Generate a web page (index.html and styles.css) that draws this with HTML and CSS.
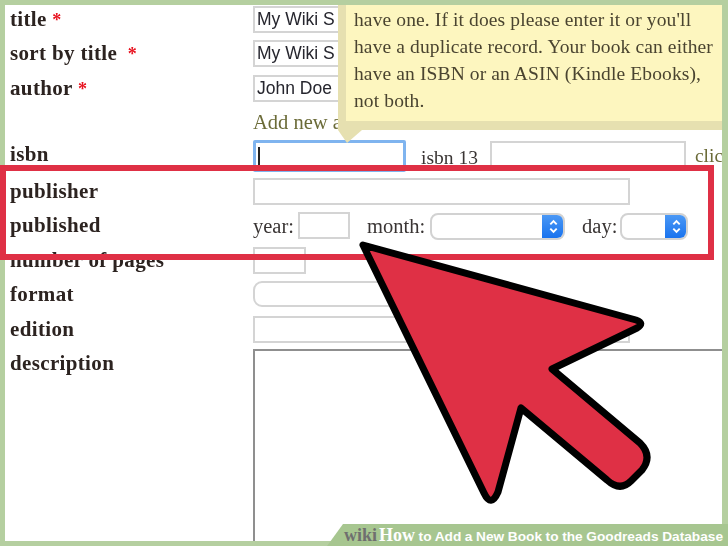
FILE: index.html
```html
<!DOCTYPE html>
<html lang="en">
<head>
<meta charset="utf-8">
<title>How to Add a New Book to the Goodreads Database</title>
<link rel="stylesheet" href="styles.css">
</head>
<body>
<main class="frame">
  <form class="form">
    <div class="label">title <span class="req">*</span></div>
    <div class="field"><div class="input w-wide sans">My Wiki S</div></div>
    <div class="label">sort by title <span class="req req-far">*</span></div>
    <div class="field"><div class="input w-wide sans">My Wiki S</div></div>
    <div class="label">author <span class="req">*</span></div>
    <div class="field"><div class="input w-wide sans">John Doe</div></div>
    <div class="label"></div>
    <div class="field"><span class="link">Add new a</span></div>
    <div class="label">isbn</div>
    <div class="field">
      <div class="input focus"><span class="caret"></span></div>
      <span class="plain isbn13">isbn 13</span>
      <div class="input w-isbn13"></div>
      <span class="link click">clic</span>
    </div>
    <div class="label">publisher</div>
    <div class="field"><div class="input w-publisher"></div></div>
    <div class="label">published</div>
    <div class="field">
      <span class="plain">year:</span>
      <div class="input w-year"></div>
      <span class="plain month">month:</span>
      <div class="select w-month"><span class="stepper"><svg viewBox="0 0 10 16" class="chev"><path d="M2 6 5 3 8 6M2 10 5 13 8 10"/></svg></span></div>
      <span class="plain day">day:</span>
      <div class="select w-day"><span class="stepper"><svg viewBox="0 0 10 16" class="chev"><path d="M2 6 5 3 8 6M2 10 5 13 8 10"/></svg></span></div>
    </div>
    <div class="label">number of pages</div>
    <div class="field"><div class="input w-pages"></div></div>
    <div class="label">format</div>
    <div class="field"><div class="input round w-format"></div></div>
    <div class="label">edition</div>
    <div class="field"><div class="input w-publisher"></div></div>
    <div class="label label-desc">description</div>
    <div class="field"><div class="textarea"></div></div>
  </form>
  <aside class="tip">
    <p>have one. If it does please enter it or you'll<br>have a duplicate record. Your book can either<br>have an ISBN or an ASIN (Kindle Ebooks),<br>not both.</p>
  </aside>
  <svg class="tip-point" viewBox="0 0 24 13"><path d="M0 0H24L9 13Z"/></svg>
</main>
<div class="highlight"></div>
<svg class="arrow" viewBox="0 0 728 546">
  <path d="M363 245 L636 320 Q645 323 637 328 L552 369 L640 443 Q653 456 642 470 L631 481 Q620 492 607 480 L521 408 L498 492 Q491 508 484 493 Z"/>
</svg>
<footer class="banner">
  <svg class="banner-bg" viewBox="0 0 401 22" preserveAspectRatio="none"><path d="M16 0H401V22H0Z"/></svg>
  <p class="caption"><span class="wiki">wiki</span><span class="how">How</span> to Add a New Book to the Goodreads Database</p>
</footer>
</body>
</html>
```
FILE: styles.css
```css
* { box-sizing: border-box; }
html, body { margin: 0; padding: 0; }
body { width: 728px; height: 546px; position: relative; overflow: hidden; background: #b5cfa0; font-family: "Liberation Serif", "DejaVu Serif", serif; }
.frame { position: absolute; left: 5px; top: 5px; width: 717px; height: 536px; background: #fff; overflow: hidden; filter: blur(.3px); }
.form { display: grid; grid-template-columns: 248px 1fr; grid-template-rows: 34px 35px 35px 31px 37px 34px 35px 34px 35px 33px 1fr; padding-top: 1px; height: 100%; }
.label { font-weight: 700; font-size: 21px; color: #2c2320; padding-left: 5px; line-height: 27px; letter-spacing: .35px; }
.label-desc { padding-top: 1px; }
.req { color: #e8121f; font-size: 18px; }
.req-far { margin-left: 5px; }
.field { display: flex; align-items: flex-start; white-space: nowrap; }
.input { height: 27px; border: 2px solid #d4d4d4; background: #fff; flex: none; overflow: hidden; }
.sans { font-family: "Liberation Sans", Arial, sans-serif; font-size: 17.5px; line-height: 23px; color: #26262e; padding-left: 2px; }
.w-wide { width: 300px; }
.w-isbn13 { width: 196px; margin-left: 12px; }
.w-publisher { width: 377px; }
.w-year { width: 52px; margin-left: 4px; }
.w-pages { width: 53px; }
.w-format { width: 200px; }
.round { border-radius: 9px; height: 26px; }
.focus { width: 153px; height: 32px; border: 3px solid #7fb4ef; margin-top: -1px; border-radius: 2px; }
.caret { display: block; width: 2px; height: 18px; background: #222; margin: 4px 0 0 2px; }
.link { color: #6b6b38; font-size: 20.5px; line-height: 24px; }
.click { margin-left: 9px; line-height: 30px; font-size: 19.5px; }
.plain { font-size: 20.5px; line-height: 29px; color: #3a3534; }
.isbn13 { margin-left: 15px; line-height: 33px; font-size: 19.5px; }
.month { margin-left: 17px; }
.day { margin-left: 17px; }
.select { position: relative; height: 27px; border: 2px solid #d2d2d2; border-radius: 8px; background: #fff; flex: none; margin-left: 5px; margin-top: 1px; overflow: hidden; }
.w-month { width: 135px; }
.w-day { width: 68px; margin-left: 3px; }
.stepper { position: absolute; right: -2px; top: -2px; bottom: -2px; width: 23px; background: linear-gradient(#4f9bf5, #1570ee); display: flex; align-items: center; justify-content: center; }
.chev { width: 11px; height: 17px; }
.chev path { fill: none; stroke: #fff; stroke-width: 1.8; }
.textarea { width: 480px; height: 300px; border: 2px solid #8f8f8f; border-right: 0; background: #fff; }
.tip { position: absolute; left: 333px; top: 0; width: 384px; height: 125px; background: #fdf6bf; border-left: 8px solid #e6e0b0; border-bottom: 9px solid #e6e0b0; }
.tip p { margin: 0; padding: 1px 0 0 8px; font-size: 19.5px; line-height: 27px; color: #4a4430; letter-spacing: .12px; white-space: nowrap; }
.tip-point { position: absolute; left: 333px; top: 125px; width: 24px; height: 13px; }
.tip-point path { fill: #e6e0b0; }
.highlight { position: absolute; left: 0; top: 165px; width: 714px; height: 95px; border: 6px solid #df3045; }
.arrow { position: absolute; left: 0; top: 0; width: 728px; height: 546px; }
.arrow path { fill: #df3045; stroke: #000; stroke-width: 7; stroke-linejoin: round; }
.banner { position: absolute; right: 0; bottom: 0; width: 401px; height: 22px; }
.banner-bg { position: absolute; inset: 0; width: 100%; height: 100%; }
.banner-bg path { fill: #a7c690; }
.caption { position: relative; margin: 0; padding-left: 17px; line-height: 22px; font-family: "Liberation Sans", Arial, sans-serif; font-weight: 700; font-size: 13.7px; color: #fff; white-space: nowrap; word-spacing: -.2px; }
.wiki { font-family: "Liberation Serif", serif; color: #6f6f6f; font-size: 18px; }
.how { font-family: "Liberation Serif", serif; font-size: 18px; margin-left: 2px; }
```
